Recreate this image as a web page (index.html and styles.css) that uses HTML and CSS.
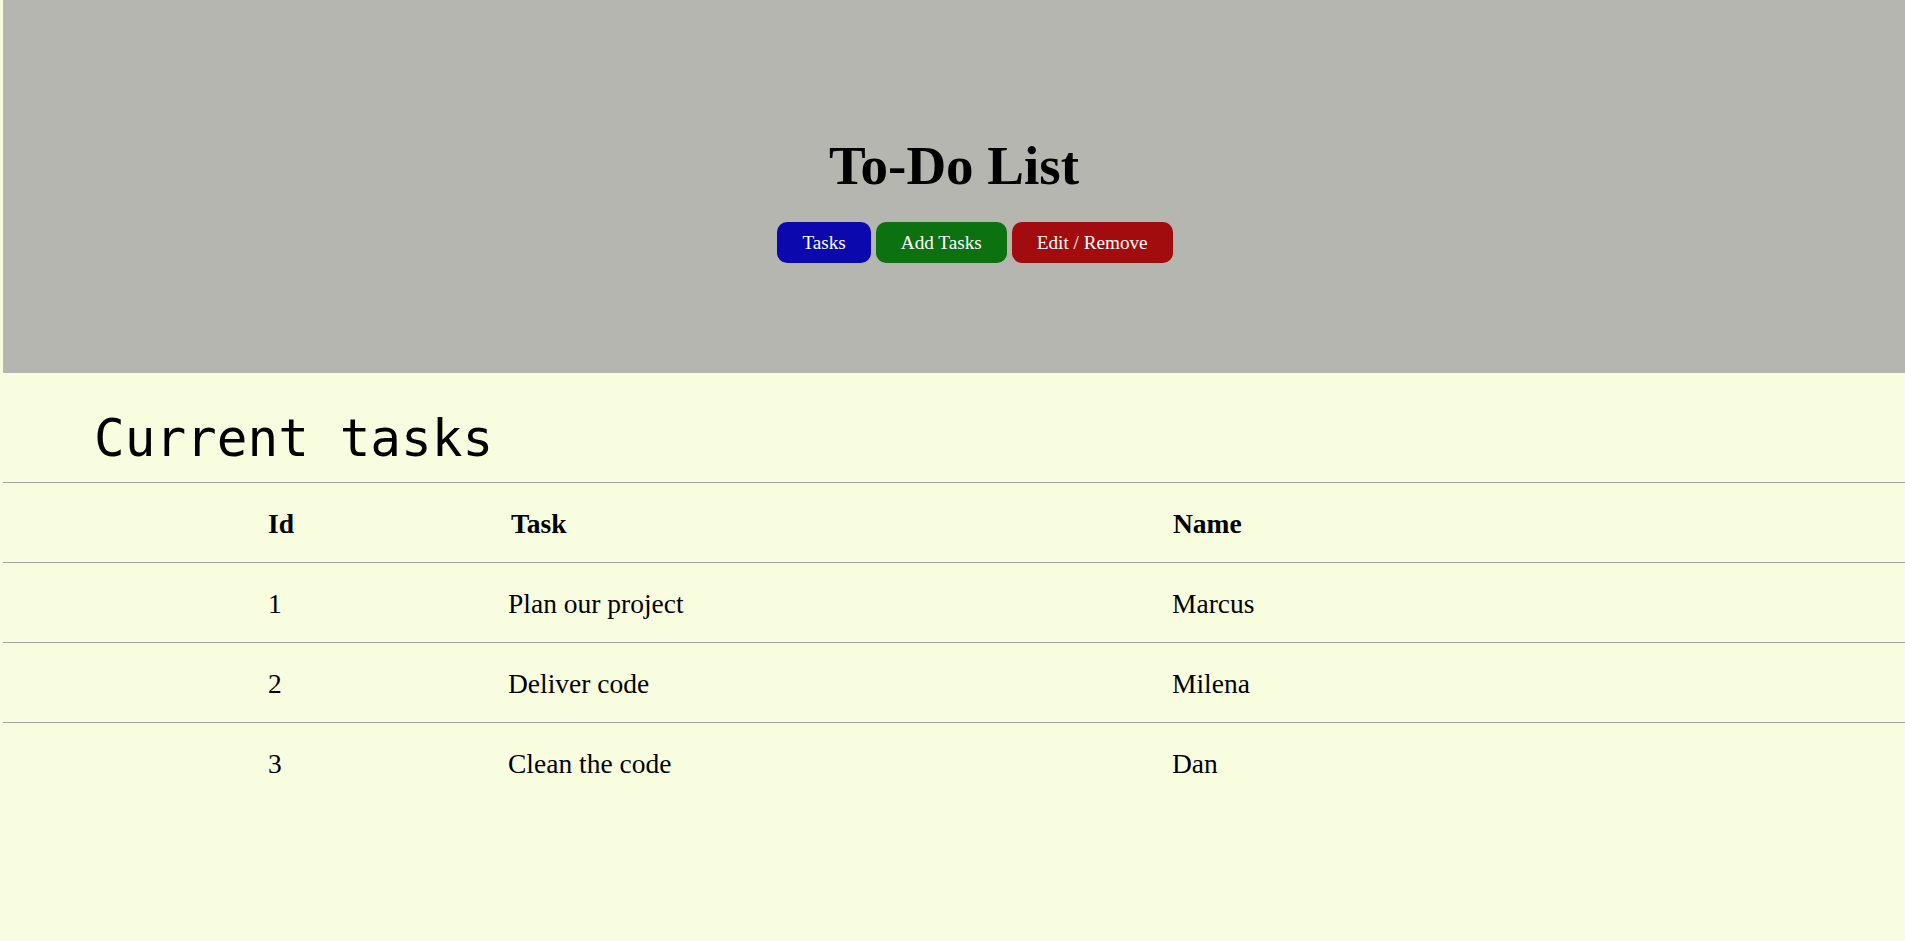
FILE: index.html
```html
<!DOCTYPE html>
<html lang="en">
<head>
<meta charset="utf-8">
<title>To-Do List</title>
<link rel="stylesheet" href="styles.css">
</head>
<body>
<header class="top">
  <h1 class="title">To-Do List</h1>
  <ul class="nav">
    <li><a class="btn btn-blue" href="#">Tasks</a></li>
    <li><a class="btn btn-green" href="#">Add Tasks</a></li>
    <li><a class="btn btn-red" href="#">Edit / Remove</a></li>
  </ul>
</header>
<main class="content">
  <h2 class="section-title">Current tasks</h2>
  <table class="tasks">
    <colgroup>
      <col class="c-id">
      <col class="c-task">
      <col class="c-name">
    </colgroup>
    <thead>
      <tr><th class="cell-id">Id</th><th class="cell-task">Task</th><th class="cell-name">Name</th></tr>
    </thead>
    <tbody>
      <tr><td class="cell-id">1</td><td class="cell-task">Plan our project</td><td class="cell-name">Marcus</td></tr>
      <tr><td class="cell-id">2</td><td class="cell-task">Deliver code</td><td class="cell-name">Milena</td></tr>
      <tr><td class="cell-id">3</td><td class="cell-task">Clean the code</td><td class="cell-name">Dan</td></tr>
    </tbody>
  </table>
</main>
</body>
</html>
```
FILE: styles.css
```css
html, body {
  margin: 0;
  padding: 0;
}
body {
  background: #f9fde0;
  font-family: "Liberation Serif", "Times New Roman", serif;
  color: #000;
  margin-left: 3px;
  min-height: 941px;
}
.top {
  background: #b5b6b0;
  height: 373px;
  box-sizing: border-box;
  padding-top: 136px;
  text-align: center;
}
.title {
  margin: 0;
  font-size: 55px;
  line-height: 60px;
  font-weight: bold;
}
.nav {
  list-style: none;
  margin: 26px 0 0;
  padding: 0 0 0 42px;
  display: flex;
  justify-content: center;
  gap: 5px;
}
.btn {
  display: block;
  color: #fff;
  text-decoration: none;
  font-size: 19.2px;
  line-height: 21px;
  padding: 10px 25px;
  border-radius: 10px;
}
.btn-blue { background: #0b09ad; }
.btn-green { background: #0b720f; }
.btn-red { background: #a20c0e; }

.content {
  padding-top: 36px;
}
.section-title {
  margin: 0 0 13px;
  padding-left: 91px;
  font-family: "DejaVu Sans Mono", monospace;
  font-weight: normal;
  font-size: 51px;
  line-height: 60px;
}
.tasks {
  width: 100%;
  border-collapse: collapse;
  table-layout: fixed;
  font-size: 27.5px;
}
.c-id { width: 505px; }
.c-task { width: 664px; }
.tasks th,
.tasks td {
  text-align: left;
  border-top: 1px solid #a3a3a3;
  padding: 26px 0 23px;
  line-height: 30px;
  height: 30px;
  white-space: nowrap;
}
.tasks th { font-weight: bold; }
.tasks .cell-id { padding-left: 265px; }
.tasks th.cell-task { padding-left: 3px; }
.tasks th.cell-name { padding-left: 1px; }
```
